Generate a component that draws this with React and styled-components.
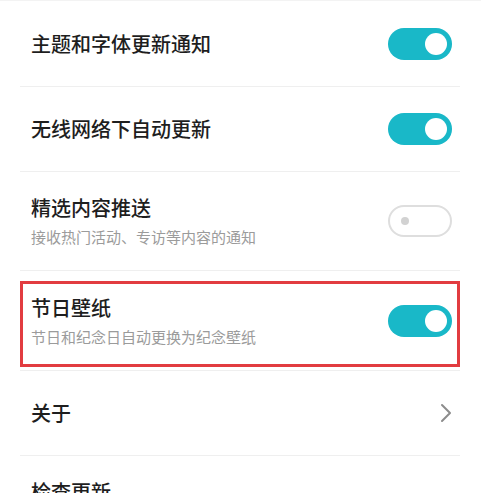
import React from 'react'
import styled, {createGlobalStyle} from 'styled-components'

const GlobalStyle = createGlobalStyle`
  html, body {
    margin: 0;
    padding: 0;
    background: #fff;
    overflow: hidden;
  }
  body {
    font-family: "Noto Sans CJK SC", "Noto Sans", sans-serif;
    -webkit-font-smoothing: antialiased;
  }
`

const Page = styled.div`
  width: 481px;
  height: 493px;
  overflow: hidden;
  background: #fff;
  border-top: 1px solid #f3f3f3;
  box-sizing: border-box;
`

const List = styled.div`
  display: flex;
  flex-direction: column;
  padding: 0 21px 0 20px;
`

const Row = styled.div`
  position: relative;
  display: flex;
  align-items: center;
  justify-content: space-between;
  height: ${({height}) => height}px;
  padding: 0 8px 0 11px;
  border-bottom: 1px solid #efefef;
  flex-shrink: 0;

  ${({highlight}) =>
    highlight &&
    `
    &::after {
      content: '';
      position: absolute;
      top: 10px;
      bottom: 3px;
      left: 0;
      right: 0;
      border: 3px solid #e23c40;
      pointer-events: none;
    }
  `}
`

const Texts = styled.div`
  display: flex;
  flex-direction: column;
`

const Title = styled.div`
  font-size: 20px;
  line-height: 26px;
  font-weight: 500;
  color: #1e1e1e;
`

const Sub = styled.div`
  margin-top: 6px;
  font-size: 15px;
  line-height: 20px;
  color: #9b9b9b;
`

const Track = styled.div`
  position: relative;
  width: 64px;
  height: 32px;
  border-radius: 16px;
  box-sizing: border-box;
  background: ${({on}) => (on ? '#19b8c8' : '#fff')};
  border: ${({on}) => (on ? 'none' : '2px solid #dedede')};
  flex-shrink: 0;
`

const Knob = styled.div`
  position: absolute;
  top: 50%;
  transform: translateY(-50%);
  ${({on}) =>
    on
      ? `
    right: 5px;
    width: 22px;
    height: 22px;
    background: #fff;
  `
      : `
    left: 11px;
    width: 8px;
    height: 8px;
    background: #d2d2d2;
  `}
  border-radius: 50%;
`

const Switch = ({on}) => (
  <Track on={on ? 1 : 0}>
    <Knob on={on ? 1 : 0} />
  </Track>
)

const Chevron = () => (
  <svg width="12" height="20" viewBox="0 0 12 20" fill="none">
    <polyline
      points="2,2 10,10 2,18"
      stroke="#8c8c8c"
      strokeWidth="2"
      strokeLinecap="round"
      strokeLinejoin="round"
    />
  </svg>
)

const rows = [
  {title: '主题和字体更新通知', h: 85, toggle: true},
  {title: '无线网络下自动更新', h: 84, toggle: true},
  {title: '精选内容推送', sub: '接收热门活动、专访等内容的通知', h: 98, toggle: false},
  {title: '节日壁纸', sub: '节日和纪念日自动更换为纪念壁纸', h: 99, toggle: true, highlight: true},
  {title: '关于', h: 84, arrow: true},
  {title: '检查更新', h: 72},
]

export default function App() {
  return (
    <Page>
      <GlobalStyle />
      <List>
        {rows.map(({title, sub, h, toggle, arrow, highlight}) => (
          <Row key={title} height={h} highlight={highlight ? 1 : 0}>
            <Texts>
              <Title>{title}</Title>
              {sub && <Sub>{sub}</Sub>}
            </Texts>
            {arrow ? <Chevron /> : toggle !== undefined && <Switch on={toggle} />}
          </Row>
        ))}
      </List>
    </Page>
  )
}
